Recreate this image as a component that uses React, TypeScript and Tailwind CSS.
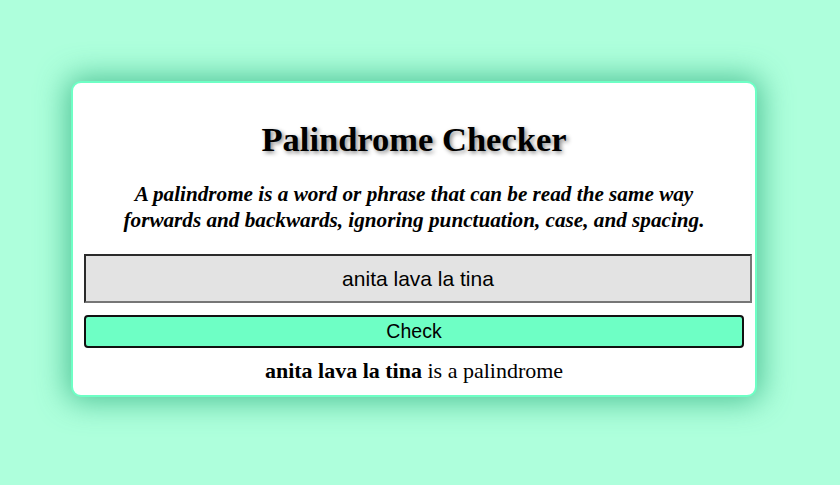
export default function App() {
  return (
    <div className="min-h-[485px] bg-[#aeffdc] pt-[81px] pl-[71px] font-['Liberation_Serif',serif] text-black">
      <div className="w-[686px] rounded-[10px] border-2 border-[#6effc5] bg-white px-[11px] pt-[36px] pb-[12px] shadow-[0_0_30px_4px_rgba(45,175,125,0.75)]">
        <h1 className="text-center text-[34.5px] leading-[40px] font-bold [text-shadow:2px_2px_4px_#8a8a8a]">
          Palindrome Checker
        </h1>
        <p className="mx-auto mt-[22px] w-[604px] text-center text-[21.2px] leading-[26px] font-bold italic">
          A palindrome is a word or phrase that can be read the same way forwards and backwards, ignoring
          punctuation, case, and spacing.
        </p>
        <input
          type="text"
          defaultValue="anita lava la tina"
          className="mt-[21px] block h-[49px] w-[668px] border-2 border-t-[#2b2b2b] border-l-[#2b2b2b] border-b-[#767676] border-r-[#767676] bg-[#e3e3e3] text-center font-['Liberation_Sans',sans-serif] text-[21px] text-black outline-none"
        />
        <button className="mt-[12px] block h-[33px] w-full rounded-[4px] border-2 border-[#111] bg-[#6effc5] font-['Liberation_Sans',sans-serif] text-[19.5px] leading-none">
          Check
        </button>
        <p className="mt-[10px] text-center text-[22px] leading-[25px]">
          <span className="font-bold">anita lava la tina</span> is a palindrome
        </p>
      </div>
    </div>
  );
}
